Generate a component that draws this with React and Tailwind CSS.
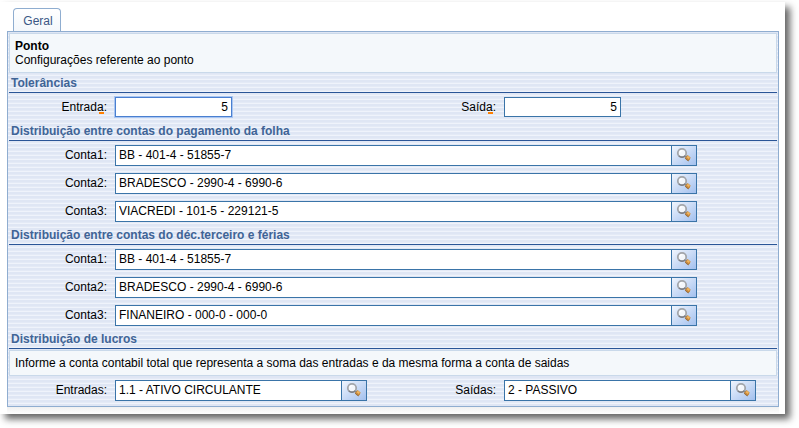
import React from "react";

const accountsFolha = ["BB - 401-4 - 51855-7", "BRADESCO - 2990-4 - 6990-6", "VIACREDI - 101-5 - 229121-5"];
const accountsFerias = ["BB - 401-4 - 51855-7", "BRADESCO - 2990-4 - 6990-6", "FINANEIRO - 000-0 - 000-0"];

function Magnifier() {
  return (
    <svg width="16" height="16" viewBox="0 0 16 16" aria-hidden="true">
      <path d="M8.4 8.6l2.4 1.6" stroke="#77777a" strokeWidth="2.2" />
      <path d="M8.8 11l2.8-3 3 2.6-.6 1.6-1.8 1.8-1.2-.4z" fill="#c98a3c" />
      <path d="M10.6 10.2l1.4-1.4 2 1.7-1.3 1.4z" fill="#f0b560" />
      <path d="M9 11.2l3.2 2.6.9-.4" stroke="#8b6a48" strokeWidth="0.9" fill="none" />
      <circle cx="6" cy="6" r="4.2" fill="#f4f7fb" stroke="#a3a6ab" strokeWidth="1.8" />
      <path d="M2.9 9a4.3 4.3 0 0 0 6.3-.2" stroke="#7c7e84" strokeWidth="1.4" fill="none" />
      <path d="M4 5.5a2.3 2.3 0 0 1 2.2-1.9" stroke="#fff" strokeWidth="1.3" fill="none" />
    </svg>
  );
}

function SectionTitle({ children }) {
  return (
    <h2 className="h-5 border-b border-[#2a5597] pt-px pl-0.5 text-[12px] leading-[19px] font-bold text-[#406496]">
      {children}
    </h2>
  );
}

function Field({ id, label, required, children }) {
  return (
    <div className="flex h-7 items-start gap-2 pt-1">
      <label htmlFor={id} className="w-[98px] shrink-0 text-right leading-5">
        {required ? (
          <>
            {label.slice(0, -1)}
            <span className="relative">
              {label.slice(-1)}
              <span className="absolute right-0 bottom-0 h-0.5 w-[5px] bg-[#ff7f00]" />
            </span>
          </>
        ) : (
          label
        )}
        :
      </label>
      {children}
    </div>
  );
}

function NumberBox({ id, focused }) {
  return (
    <input
      id={id}
      defaultValue="5"
      className={
        "h-5 w-[117px] border bg-white px-[3px] text-right outline-none " +
        (focused ? "border-[#4a7fd0] shadow-[0_0_0_1px_#a9c6f2]" : "border-[#3a74a8]")
      }
    />
  );
}

function LookupBox({ id, value, wide }) {
  return (
    <div
      className={
        "flex h-[21px] min-w-0 flex-1 border border-[#3a74a8] bg-white " + (wide ? "max-w-[582px]" : "max-w-[252px]")
      }
    >
      <input id={id} defaultValue={value} className="min-w-0 flex-1 px-[3px] pb-0.5 outline-none" />
      <button
        type="button"
        aria-label="Pesquisar"
        className="flex w-[25px] items-start justify-center border-l border-[#3a74a8] bg-linear-to-br from-[#f0f5fd] to-[#a3c0ee] pt-px"
      >
        <Magnifier />
      </button>
    </div>
  );
}

function AccountRows({ prefix, accounts }) {
  return accounts.map((account, i) => (
    <Field key={i} id={prefix + i} label={"Conta" + (i + 1)}>
      <LookupBox id={prefix + i} value={account} wide />
    </Field>
  ));
}

export default function App() {
  return (
    <div className="bg-white pt-0.5 pr-3.5 pb-3.5 font-['Liberation_Sans',Arial,sans-serif] text-[12px] text-black">
      <main className="bg-white pt-1.5 pr-1.5 pl-[7px] shadow-[5px_5px_7px_0px_#666666]">
        <div role="tablist" className="flex pl-1.5">
          <button
            type="button"
            role="tab"
            aria-selected="true"
            className="h-[23px] w-12 rounded-t border border-b-0 border-[#8fadd0] bg-linear-to-b from-white to-[#f3f7fb] pt-0.5 pl-0.5 text-center text-[#3a5684]"
          >
            Geral
          </button>
        </div>
        <div className="border border-[#8fadd0] bg-[repeating-linear-gradient(to_bottom,#dfe6f4_0px,#dfe6f4_2px,#e4eaf6_2px,#e4eaf6_3px,#eff3fb_3px,#eff3fb_4px)] p-px pb-0.5">
          <header className="border border-[#c9d9ea] bg-[#f4f8fb] px-[5px] py-[5px] leading-[14px]">
            <h1 className="font-bold">Ponto</h1>
            <p>Configurações referente ao ponto</p>
          </header>
          <SectionTitle>Tolerâncias</SectionTitle>
          <div className="grid grid-cols-2 gap-x-2.5">
            <Field id="entrada" label="Entrada" required>
              <NumberBox id="entrada" focused />
            </Field>
            <Field id="saida" label="Saída" required>
              <NumberBox id="saida" />
            </Field>
          </div>
          <SectionTitle>Distribuição entre contas do pagamento da folha</SectionTitle>
          <AccountRows prefix="folha" accounts={accountsFolha} />
          <SectionTitle>Distribuição entre contas do déc.terceiro e férias</SectionTitle>
          <AccountRows prefix="ferias" accounts={accountsFerias} />
          <SectionTitle>Distribuição de lucros</SectionTitle>
          <p className="mt-px border border-[#c9d9ea] bg-[#f4f8fb] px-[5px] py-1 leading-4">
            Informe a conta contabil total que representa a soma das entradas e da mesma forma a conta de saidas
          </p>
          <div className="grid grid-cols-2 gap-x-2.5">
            <Field id="entradas" label="Entradas">
              <LookupBox id="entradas" value="1.1 - ATIVO CIRCULANTE" />
            </Field>
            <Field id="saidas" label="Saídas">
              <LookupBox id="saidas" value="2 - PASSIVO" />
            </Field>
          </div>
        </div>
        <div className="h-[7px] bg-linear-to-b from-[#f0f0f0] to-white" />
      </main>
    </div>
  );
}
